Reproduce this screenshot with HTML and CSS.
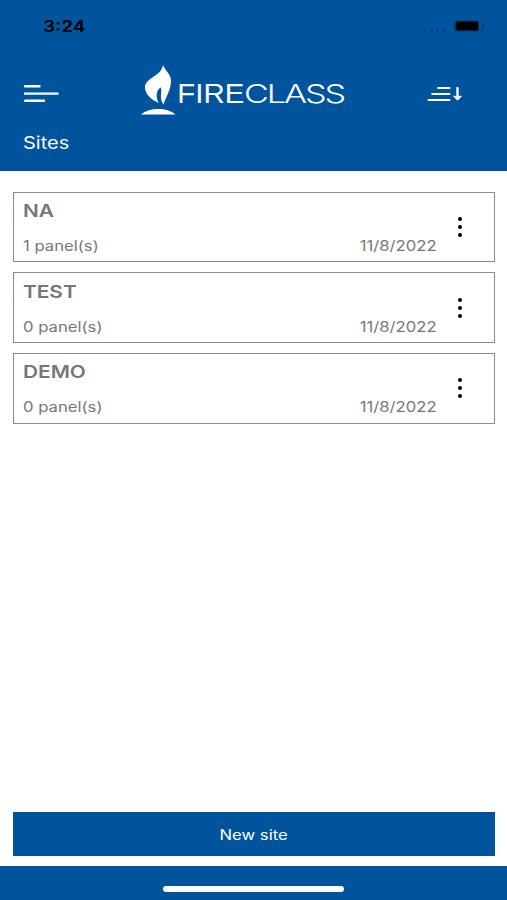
FILE: index.html
```html
<!DOCTYPE html>
<html lang="en">
<head>
    <meta charset="UTF-8">
    <meta name="viewport" content="width=device-width, initial-scale=1.0">
    <title>FireClass - Sites</title>
    <link rel="stylesheet" href="styles.css">
</head>
<body>

<div class="app">
    <header class="header">
        <div class="status-bar">
            <span class="time wide">3:24</span>
            <svg class="status-icons" width="64" height="16" viewBox="0 0 64 16">
                <g fill="#003f7d">
                    <circle cx="3.5" cy="10" r="1.5"/>
                    <circle cx="9.5" cy="10" r="1.5"/>
                    <circle cx="15.5" cy="10" r="1.5"/>
                    <circle cx="21.5" cy="10" r="1.5"/>
                </g>
                <rect x="32" y="0.8" width="28.5" height="10.4" rx="3" fill="none" stroke="#00407f"/>
                <rect x="33.5" y="1.6" width="23" height="8.8" rx="1.5" fill="#000"/>
                <path d="M61.5 4.2 Q64.4 6 61.5 7.8 Z" fill="#002d5e"/>
            </svg>
        </div>

        <div class="nav">
            <button class="icon-btn" aria-label="Menu">
                <svg width="36" height="20" viewBox="0 0 36 20" stroke="#fff" stroke-width="2.4" stroke-linecap="round">
                    <path d="M1 2.3H15.5M1 9.6H33.6M1 16.8H20"/>
                </svg>
            </button>
            <svg class="logo" width="204" height="52" viewBox="0 0 204 52">
                <path d="M21.9 0C23.6 5 29.2 8.5 29.9 14.5C30.7 22.5 26 30 22.4 39.4C20.4 36.6 19.8 34 19.9 31C20 28 21 25 19.6 22.2C15.2 25.5 14.4 32 17.8 38C11.5 35.5 4.2 30 4 22.6C4 12.5 20.5 11.5 21.9 0Z" fill="#fff"/>
                <path d="M0 49.5C8.5 42.2 26 42.2 34.5 49.5Z" fill="#fff"/>
                <text class="logo-fire" x="36.3" y="38.2" textLength="67" lengthAdjust="spacingAndGlyphs">FIRE</text>
                <text class="logo-class" x="103" y="38.2" textLength="100" lengthAdjust="spacingAndGlyphs">CLASS</text>
            </svg>
            <button class="icon-btn" aria-label="Sort">
                <svg width="36" height="16" viewBox="0 0 36 16" stroke="#fff" stroke-width="2" stroke-linecap="round" fill="none">
                    <path d="M11 2H22.5M5.2 8H22.5M1.5 14H22.5"/>
                    <path d="M30.5 2V11" stroke-width="2.4"/>
                    <path d="M26.4 10.2H34.6L30.5 14.2Z" fill="#fff" stroke="none"/>
                    <path d="M27.3 10.4L30.5 13.4L33.7 10.4" stroke-width="1.6"/>
                </svg>
            </button>
        </div>

        <h1 class="page-title wide">Sites</h1>
    </header>

    <main class="sites">
        <div class="site">
            <div class="site-info">
                <h2 class="wide">NA</h2>
                <div class="site-meta">
                    <span class="wide">1 panel(s)</span>
                    <span class="date wide">11/8/2022</span>
                </div>
            </div>
            <button class="more" aria-label="More"><i></i><i></i><i></i></button>
        </div>
        <div class="site">
            <div class="site-info">
                <h2 class="wide">TEST</h2>
                <div class="site-meta">
                    <span class="wide">0 panel(s)</span>
                    <span class="date wide">11/8/2022</span>
                </div>
            </div>
            <button class="more" aria-label="More"><i></i><i></i><i></i></button>
        </div>
        <div class="site">
            <div class="site-info">
                <h2 class="wide">DEMO</h2>
                <div class="site-meta">
                    <span class="wide">0 panel(s)</span>
                    <span class="date wide">11/8/2022</span>
                </div>
            </div>
            <button class="more" aria-label="More"><i></i><i></i><i></i></button>
        </div>
    </main>

    <button class="new-site"><span class="wide">New site</span></button>

    <footer class="footer">
        <div class="home-bar"></div>
    </footer>
</div>

</body>
</html>
```
FILE: styles.css
```css
* {
    box-sizing: border-box;
}

body {
    font-family: Inter, "Liberation Sans", sans-serif;
    background-color: white;
    margin: 0;
}

button {
    font-family: inherit;
    border: none;
    background: none;
    padding: 0;
    cursor: pointer;
}

svg {
    display: block;
}

.app {
    display: flex;
    flex-direction: column;
    height: 900px;
}

/* extended letterforms */
.wide {
    display: inline-block;
    transform: scaleX(1.19);
    transform-origin: left center;
}

.header {
    background-color: #00549e;
    color: white;
    height: 171px;
    padding: 0 24px;
}

.status-bar {
    display: flex;
    justify-content: space-between;
    height: 64px;
    padding: 16px 0 0 19px;
}

.time {
    color: black;
    font-size: 16px;
    line-height: 20px;
    font-weight: 600;
}

.status-icons {
    margin: 4px -3px 0 0;
}

.nav {
    display: flex;
    justify-content: space-between;
    align-items: center;
    height: 60px;
    padding-right: 20px;
}

.logo {
    margin: -7px 1px 0 0;
}

.logo-fire,
.logo-class {
    fill: white;
    font-size: 27px;
}

.logo-fire {
    font-family: "Liberation Sans", sans-serif;
}

.logo-class {
    font-size: 26px;
    font-weight: 300;
    letter-spacing: -1.6px;
}

.page-title {
    margin: 8px 0 0 -1px;
    font-size: 16.8px;
    line-height: 23px;
    font-weight: 400;
}

.sites {
    flex: 1;
    display: flex;
    flex-direction: column;
    gap: 10px;
    padding: 20.7px 12.5px 0 13px;
}

.site {
    display: flex;
    height: 70.7px;
    border: 1px solid #8c8c8c;
    color: #777;
}

.site-info {
    flex: 1;
    padding: 7.4px 0 0 8.7px;
}

.site h2 {
    margin: 0;
    font-size: 17.5px;
    line-height: 22px;
    font-weight: 600;
}

.site-meta {
    display: flex;
    justify-content: space-between;
    margin-top: 14px;
    font-size: 14px;
    line-height: 20px;
}

.date {
    transform-origin: right center;
}

.more {
    display: flex;
    flex-direction: column;
    align-items: center;
    gap: 4px;
    width: 46px;
    margin-right: 10.5px;
    padding-top: 24.3px;
}

.more i {
    width: 4px;
    height: 4px;
    border-radius: 50%;
    background-color: black;
}

.new-site {
    height: 44px;
    margin: 0 12.5px 10px 13px;
    background-color: #00549e;
    color: white;
    font-size: 14px;
}

.new-site .wide {
    transform-origin: center;
}

.footer {
    display: flex;
    justify-content: center;
    height: 34px;
    padding-top: 20px;
    background-color: #00549e;
}

.home-bar {
    width: 181px;
    height: 6px;
    border-radius: 3px;
    background-color: white;
}
```
